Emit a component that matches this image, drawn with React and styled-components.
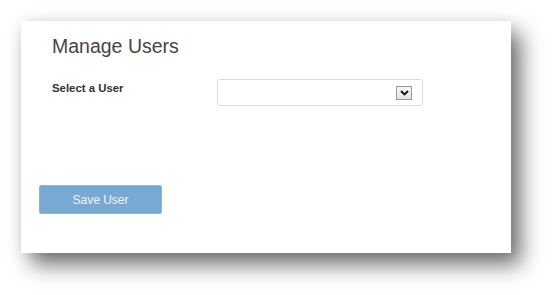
import React from "react";
import styled, { createGlobalStyle } from "styled-components";

const GlobalStyle = createGlobalStyle`
body {
    margin: 0;
    background: #ffffff;
    font-family: "Liberation Sans", Arial, sans-serif;
}
`

const Page = styled.div`
width: 553px;
height: 295px;
padding: 21px 0 0 21px;
box-sizing: border-box;
`

const Card = styled.div`
width: 490px;
height: 232px;
background: #ffffff;
box-sizing: border-box;
padding: 13px 0 0 0;
box-shadow: 0 0 12px rgba(0, 0, 0, 0.08), 10px 12px 20px rgba(0, 0, 0, 0.55);
`

const Title = styled.h1`
margin: 0 0 0 31px;
font-size: 19.5px;
font-weight: normal;
line-height: 24px;
color: #454545;
`

/* label + select */
const FieldRow = styled.div`
display: flex;
align-items: flex-start;
margin-top: 21px;
padding-left: 31px;
`

const Label = styled.label`
width: 165px;
font-size: 11.4px;
font-weight: bold;
color: #333333;
line-height: 14px;
margin-top: 2px;
`

const SelectBox = styled.div`
width: 206px;
height: 27px;
box-sizing: border-box;
border: 1px solid #dcdcdc;
border-radius: 3px;
display: flex;
align-items: center;
justify-content: flex-end;
padding-right: 10px;
`

const ArrowButton = styled.span`
width: 16px;
height: 14px;
box-sizing: border-box;
border: 1px solid #9a9a9a;
background: linear-gradient(#f6f6f6, #e4e4e4);
display: flex;
align-items: center;
justify-content: center;
`

const SaveButton = styled.button`
display: block;
margin: 79px 0 0 18px;
width: 123px;
height: 29px;
border: 1px solid #8db6da;
border-radius: 2px;
background: #79a9d2;
color: #eef4fa;
font-family: "Liberation Sans", Arial, sans-serif;
font-size: 12px;
`

function App(){
    return(
    <>
    <GlobalStyle />
    <Page>
        <Card>
            <Title>Manage Users</Title>

            <FieldRow>
                <Label>Select a User</Label>
                <SelectBox>
                    <ArrowButton>
                        <svg width="9" height="6" viewBox="0 0 9 6">
                            <path d="M1 1 L4.5 4.5 L8 1" fill="none" stroke="#111" strokeWidth="1.8" />
                        </svg>
                    </ArrowButton>
                </SelectBox>
            </FieldRow>

            <SaveButton>Save User</SaveButton>
        </Card>
    </Page>
    </>
    )
}

export default App
